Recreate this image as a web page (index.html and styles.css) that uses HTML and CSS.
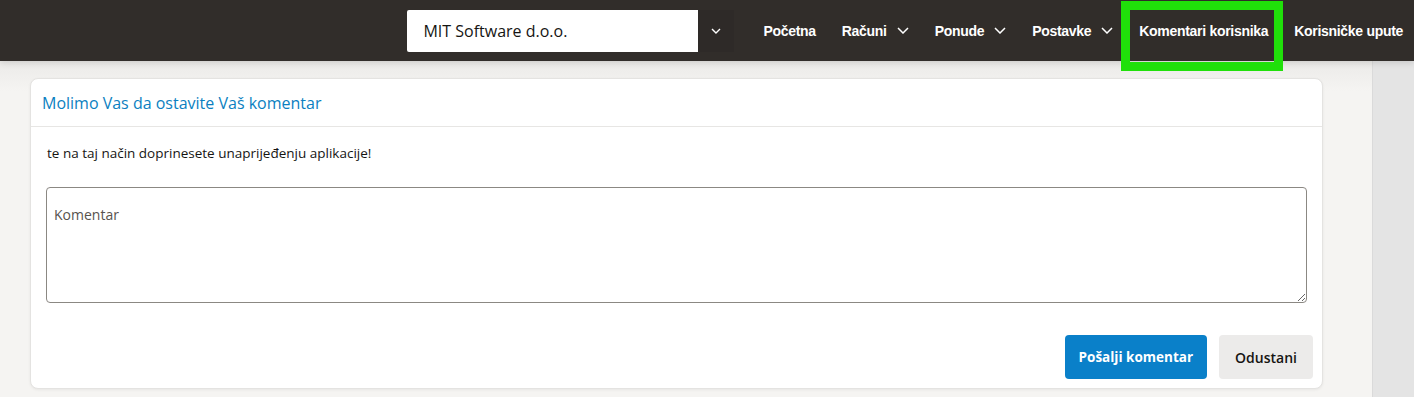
FILE: index.html
```html
<!DOCTYPE html>
<html lang="hr">
<head>
    <meta charset="UTF-8">
    <meta name="viewport" content="width=device-width, initial-scale=1.0">
    <title>Komentari korisnika</title>
    <link rel="stylesheet" href="styles.css">
</head>
<body>
    <header class="topbar">
        <div class="company-select">
            <div class="company-value">MIT Software d.o.o.</div>
            <div class="company-arrow">
                <svg width="10" height="6" viewBox="0 0 10 6"><path d="M1 1l4 4 4-4" fill="none" stroke="#fff" stroke-width="1.4"/></svg>
            </div>
        </div>
        <nav class="menu">
            <a class="menu-item">Početna</a>
            <a class="menu-item">Računi
                <svg width="12" height="7" viewBox="0 0 12 7"><path d="M1 1l5 5 5-5" fill="none" stroke="#fff" stroke-width="1.5"/></svg>
            </a>
            <a class="menu-item">Ponude
                <svg width="12" height="7" viewBox="0 0 12 7"><path d="M1 1l5 5 5-5" fill="none" stroke="#fff" stroke-width="1.5"/></svg>
            </a>
            <a class="menu-item">Postavke
                <svg width="12" height="7" viewBox="0 0 12 7"><path d="M1 1l5 5 5-5" fill="none" stroke="#fff" stroke-width="1.5"/></svg>
            </a>
            <a class="menu-item highlight">Komentari korisnika</a>
            <a class="menu-item">Korisničke upute</a>
        </nav>
    </header>

    <div class="page">
        <main class="content">
            <section class="card">
                <div class="card-header">Molimo Vas da ostavite Vaš komentar</div>
                <div class="card-body">
                    <p class="intro">te na taj način doprinesete unaprijeđenju aplikacije!</p>
                    <div class="field">
                        <label class="field-label">Komentar</label>
                        <textarea class="field-input"></textarea>
                    </div>
                    <div class="actions">
                        <button class="btn btn-primary">Pošalji komentar</button>
                        <button class="btn">Odustani</button>
                    </div>
                </div>
            </section>
        </main>
        <aside class="side-strip"></aside>
    </div>
</body>
</html>
```

FILE: styles.css
```css
body {
    margin: 0;
    font-family: "Open Sans", "Noto Sans", sans-serif;
    background-color: #f5f4f2;
    color: #161513;
    height: 397px;
    overflow: hidden;
}
.topbar {
    height: 61px;
    background-color: #312d2a;
    display: flex;
    align-items: center;
    justify-content: flex-end;
    padding-right: 11px;
    position: relative;
    z-index: 2;
    box-shadow: 0 2px 6px rgba(0, 0, 0, 0.12);
}
.company-select {
    display: flex;
    height: 42px;
    margin-right: 29px;
}
.company-value {
    width: 275px;
    background-color: #fff;
    border-radius: 2px 0 0 2px;
    padding-left: 16px;
    display: flex;
    align-items: center;
    font-size: 16px;
    color: #161513;
}
.company-arrow {
    width: 36px;
    background-color: #2e2a28;
    display: flex;
    align-items: center;
    justify-content: center;
}
.menu {
    display: flex;
    height: 61px;
    gap: 26px;
}
.menu-item {
    display: flex;
    align-items: center;
    gap: 10px;
    color: #fff;
    font-family: "Liberation Sans", Arial, sans-serif;
    font-weight: bold;
    font-size: 14px;
    letter-spacing: -0.3px;
    cursor: pointer;
}
.highlight {
    position: relative;
}
.highlight::after {
    content: "";
    position: absolute;
    left: -18px;
    right: -15px;
    top: 1px;
    bottom: -10px;
    border: 9px solid #20e00a;
}
.page {
    display: flex;
    height: 336px;
}
.content {
    flex: 1;
    padding: 17px 49px 0 30px;
    background: linear-gradient(#ebeae8, #f5f4f2 30px);
}
.side-strip {
    width: 41px;
    background-color: #e4e4e4;
    border-left: 1px solid #dadada;
}
.card {
    background-color: #fff;
    border: 1px solid #e4e3e1;
    border-radius: 8px;
    box-shadow: 0 1px 3px rgba(0, 0, 0, 0.06);
}
.card-header {
    height: 47px;
    display: flex;
    align-items: center;
    padding-left: 11px;
    font-size: 16px;
    color: #0b7fc1;
    border-bottom: 1px solid #e7e6e4;
}
.card-body {
    padding: 0 15px 9px 15px;
}
.intro {
    margin: 17px 0 25px 1px;
    font-size: 13.5px;
    color: #161513;
}
.field {
    position: relative;
}
.field-label {
    position: absolute;
    left: 8px;
    top: 18px;
    font-size: 14px;
    color: #57534e;
}
.field-input {
    display: block;
    box-sizing: border-box;
    width: 100%;
    height: 116px;
    border: 1px solid #8b8883;
    border-radius: 4px;
    resize: vertical;
    font-family: inherit;
}
.actions {
    display: flex;
    justify-content: flex-end;
    gap: 12px;
    margin-top: 32px;
    margin-right: -6px;
}
.btn {
    height: 44px;
    padding: 0 16px;
    border: none;
    border-radius: 4px;
    background-color: #ecebea;
    color: #161513;
    font-family: "Open Sans", "Noto Sans", sans-serif;
    font-weight: 600;
    font-size: 14px;
    cursor: pointer;
}
.btn-primary {
    padding: 0 14px;
    font-size: 13.5px;
    background-color: #0a80c9;
    color: #fff;
    font-weight: bold;
}
```
